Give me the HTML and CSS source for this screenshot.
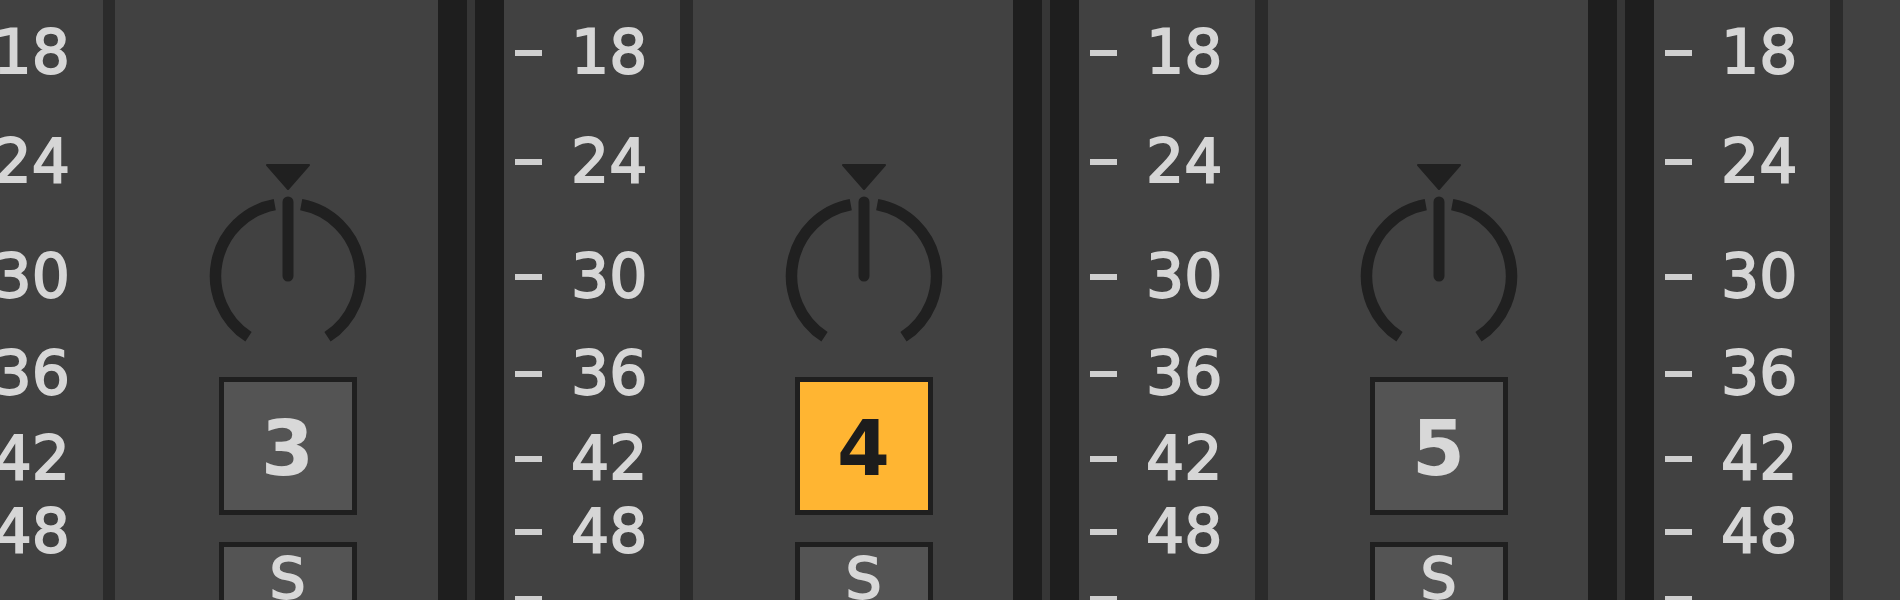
FILE: index.html
```html
<!DOCTYPE html>
<html lang="en">
<head>
<meta charset="utf-8">
<title>Mixer</title>
<link rel="stylesheet" href="styles.css">
</head>
<body>
<div class="strip">
  <section class="unit unit--lead">
    <div class="band"></div><div class="band-gap"></div><div class="band"></div>
    <div class="scale">
      <div class="tick" style="top:22px"><span class="dash"></span><span class="label">18</span></div>
      <div class="tick" style="top:131px"><span class="dash"></span><span class="label">24</span></div>
      <div class="tick" style="top:246px"><span class="dash"></span><span class="label">30</span></div>
      <div class="tick" style="top:343px"><span class="dash"></span><span class="label">36</span></div>
      <div class="tick" style="top:428px"><span class="dash"></span><span class="label">42</span></div>
      <div class="tick" style="top:501px"><span class="dash"></span><span class="label">48</span></div>
      <div class="tick" style="top:568px"><span class="dash"></span></div>
    </div>
    <div class="divider"></div>
    <div class="channel">
      <div class="controls">
        <svg class="knob" viewBox="0 0 170 200" width="170" height="200">
          <path d="M64 15 L106 15 L85 39 Z" class="knob-pointer"/>
          <path d="M85 52 L85 126" class="knob-needle"/>
          <path d="M45.52 186.8 A72.5 72.5 0 0 1 71.79 54.71" class="knob-arc"/>
          <path d="M98.21 54.71 A72.5 72.5 0 0 1 124.48 186.8" class="knob-arc"/>
        </svg>
        <div class="track-btn">3</div>
        <div class="solo-btn">S</div>
      </div>
    </div>
  </section>
  <section class="unit">
    <div class="band"></div><div class="band-gap"></div><div class="band"></div>
    <div class="scale">
      <div class="tick" style="top:22px"><span class="dash"></span><span class="label">18</span></div>
      <div class="tick" style="top:131px"><span class="dash"></span><span class="label">24</span></div>
      <div class="tick" style="top:246px"><span class="dash"></span><span class="label">30</span></div>
      <div class="tick" style="top:343px"><span class="dash"></span><span class="label">36</span></div>
      <div class="tick" style="top:428px"><span class="dash"></span><span class="label">42</span></div>
      <div class="tick" style="top:501px"><span class="dash"></span><span class="label">48</span></div>
      <div class="tick" style="top:568px"><span class="dash"></span></div>
    </div>
    <div class="divider"></div>
    <div class="channel">
      <div class="controls">
        <svg class="knob" viewBox="0 0 170 200" width="170" height="200">
          <path d="M64 15 L106 15 L85 39 Z" class="knob-pointer"/>
          <path d="M85 52 L85 126" class="knob-needle"/>
          <path d="M45.52 186.8 A72.5 72.5 0 0 1 71.79 54.71" class="knob-arc"/>
          <path d="M98.21 54.71 A72.5 72.5 0 0 1 124.48 186.8" class="knob-arc"/>
        </svg>
        <div class="track-btn track-btn--active">4</div>
        <div class="solo-btn">S</div>
      </div>
    </div>
  </section>
  <section class="unit">
    <div class="band"></div><div class="band-gap"></div><div class="band"></div>
    <div class="scale">
      <div class="tick" style="top:22px"><span class="dash"></span><span class="label">18</span></div>
      <div class="tick" style="top:131px"><span class="dash"></span><span class="label">24</span></div>
      <div class="tick" style="top:246px"><span class="dash"></span><span class="label">30</span></div>
      <div class="tick" style="top:343px"><span class="dash"></span><span class="label">36</span></div>
      <div class="tick" style="top:428px"><span class="dash"></span><span class="label">42</span></div>
      <div class="tick" style="top:501px"><span class="dash"></span><span class="label">48</span></div>
      <div class="tick" style="top:568px"><span class="dash"></span></div>
    </div>
    <div class="divider"></div>
    <div class="channel">
      <div class="controls">
        <svg class="knob" viewBox="0 0 170 200" width="170" height="200">
          <path d="M64 15 L106 15 L85 39 Z" class="knob-pointer"/>
          <path d="M85 52 L85 126" class="knob-needle"/>
          <path d="M45.52 186.8 A72.5 72.5 0 0 1 71.79 54.71" class="knob-arc"/>
          <path d="M98.21 54.71 A72.5 72.5 0 0 1 124.48 186.8" class="knob-arc"/>
        </svg>
        <div class="track-btn">5</div>
        <div class="solo-btn">S</div>
      </div>
    </div>
  </section>
  <section class="unit">
    <div class="band"></div><div class="band-gap"></div><div class="band"></div>
    <div class="scale">
      <div class="tick" style="top:22px"><span class="dash"></span><span class="label">18</span></div>
      <div class="tick" style="top:131px"><span class="dash"></span><span class="label">24</span></div>
      <div class="tick" style="top:246px"><span class="dash"></span><span class="label">30</span></div>
      <div class="tick" style="top:343px"><span class="dash"></span><span class="label">36</span></div>
      <div class="tick" style="top:428px"><span class="dash"></span><span class="label">42</span></div>
      <div class="tick" style="top:501px"><span class="dash"></span><span class="label">48</span></div>
      <div class="tick" style="top:568px"><span class="dash"></span></div>
    </div>
    <div class="divider"></div>
    <div class="channel"></div>
  </section>
</div>
</body>
</html>
```

FILE: styles.css
```css
html, body {
  margin: 0;
  padding: 0;
  width: 1900px;
  height: 600px;
  overflow: hidden;
  background: #414141;
  font-family: "DejaVu Sans", "Liberation Sans", sans-serif;
}

.strip {
  display: flex;
  height: 600px;
  margin-left: -139.5px;
}

.unit {
  flex: 0 0 575px;
  display: flex;
  height: 600px;
}

.unit--lead {
  flex-basis: 577.5px;
}

.band {
  flex: 0 0 29px;
  background: #1e1e1e;
}

.band-gap {
  flex: 0 0 7.5px;
  background: #363636;
}

.scale {
  flex: 0 0 176.5px;
  position: relative;
  background: #414141;
}

.tick {
  position: absolute;
  left: 0;
  height: 61px;
  display: flex;
  align-items: center;
  padding-left: 11px;
}

.dash {
  width: 27px;
  height: 6px;
  background: #cfcfcf;
}

.label {
  margin-left: 29.5px;
  font-size: 60px;
  line-height: 61px;
  color: #d6d6d6;
  -webkit-text-stroke: 1.8px #d6d6d6;
}

.divider {
  flex: 0 0 12.5px;
  background: #2b2b2b;
}

.channel {
  flex: 0 0 320.5px;
  background: #414141;
  padding-left: 86px;
  box-sizing: border-box;
}

.unit--lead .channel {
  flex-basis: 323px;
  padding-left: 87.5px;
}

.controls {
  width: 170px;
  padding-top: 150px;
  display: flex;
  flex-direction: column;
  align-items: center;
}

.knob {
  display: block;
}

.knob-pointer {
  fill: #202020;
  stroke: #202020;
  stroke-width: 2;
  stroke-linejoin: round;
}

.knob-needle {
  fill: none;
  stroke: #202020;
  stroke-width: 11;
  stroke-linecap: round;
}

.knob-arc {
  fill: none;
  stroke: #202020;
  stroke-width: 11.5;
}

.track-btn {
  margin-top: 27px;
  width: 138px;
  height: 138px;
  box-sizing: border-box;
  border: 5px solid #1f1f1f;
  background: #545454;
  color: #d8d8d8;
  font-size: 76px;
  font-weight: 700;
  line-height: 76px;
  padding-top: 6px;
  display: flex;
  align-items: center;
  justify-content: center;
}

.track-btn--active {
  background: #ffb532;
  color: #1c1c1c;
}

.solo-btn {
  margin-top: 27px;
  width: 138px;
  height: 110px;
  box-sizing: border-box;
  border: 5px solid #1f1f1f;
  background: #545454;
  color: #d8d8d8;
  font-size: 57px;
  line-height: 58px;
  padding-top: 3px;
  text-align: center;
  -webkit-text-stroke: 1.8px #d8d8d8;
}
```
